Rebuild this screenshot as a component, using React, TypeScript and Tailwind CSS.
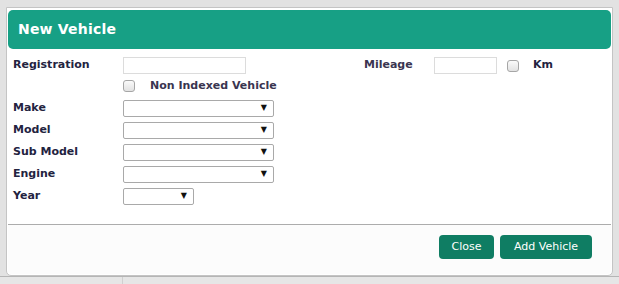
import React from 'react';

const font = { fontFamily: '"DejaVu Sans", Verdana, sans-serif' };

const Select = ({ wide = true }: { wide?: boolean }) => (
  <div
    className={`flex items-center justify-end h-[17px] border border-[#a9a9a9] rounded-[2px] bg-white pr-[6px] ${wide ? 'w-[151px]' : 'w-[71px]'}`}
  >
    <span className="text-[8px] leading-none text-[#111]">▼</span>
  </div>
);

const Checkbox = () => (
  <div className="w-[12px] h-[12px] rounded-[3px] border border-[#a6a6a6] bg-gradient-to-b from-[#fafafa] to-[#e2e2e2]" />
);

const FieldRow = ({ label, wide = true }: { label: string; wide?: boolean }) => (
  <div className="flex items-center h-[22px]">
    <div className="w-[110px] text-[11px] font-bold text-[#23233f]">{label}</div>
    <Select wide={wide} />
  </div>
);

export default function App() {
  return (
    <div className="relative w-[619px] h-[284px] bg-[#e2e2e2] overflow-hidden" style={font}>
      {/* page behind the dialog */}
      <div className="absolute left-0 top-[276px] w-full h-[8px] bg-[#e6e6e6] border-t border-[#b5b5b5]">
        <div className="ml-[122px] w-px h-full bg-[#d0d0d0]" />
      </div>

      {/* dialog */}
      <div className="absolute left-[6px] top-[7px] w-[607px] h-[269px] bg-white border border-[#c4c4c4] rounded-b-[5px] flex flex-col p-px">
        <div className="h-[39px] mt-px rounded-[5px] bg-[#17a085] flex items-center pl-[10px]">
          <span className="text-[14px] font-bold text-white tracking-[0.2px]">New Vehicle</span>
        </div>

        <div className="flex-1 pl-[5px] pt-[8px]">
          <div className="flex items-center h-[17px]">
            <div className="w-[110px] text-[11px] font-bold text-[#23233f]">Registration</div>
            <div className="w-[123px] h-[17px] border border-[#dcdcdc]" />
            <div className="ml-[118px] w-[70px] text-[11px] font-bold text-[#3a3550]">Mileage</div>
            <div className="w-[63px] h-[17px] border border-[#dcdcdc]" />
            <div className="ml-[10px]"><Checkbox /></div>
            <div className="ml-[14px] text-[11px] font-bold text-[#23233f]">Km</div>
          </div>
          <div className="flex items-center h-[22px] pl-[110px] mt-[1px]">
            <Checkbox />
            <span className="ml-[15px] text-[11px] font-bold text-[#3a3550]">Non Indexed Vehicle</span>
          </div>
          <FieldRow label="Make" />
          <FieldRow label="Model" />
          <FieldRow label="Sub Model" />
          <FieldRow label="Engine" />
          <FieldRow label="Year" wide={false} />
        </div>

        <div className="h-[50px] border-t border-[#acacac] bg-[#fcfcfc] rounded-b-[4px] flex items-start justify-end gap-[6px] pt-[10px] pr-[19px]">
          <button className="h-[24px] w-[55px] rounded-[4px] bg-[#0f7d63] text-white text-[11px]">Close</button>
          <button className="h-[24px] w-[92px] rounded-[4px] bg-[#0f7d63] text-white text-[11px]">Add Vehicle</button>
        </div>
      </div>
    </div>
  );
}
